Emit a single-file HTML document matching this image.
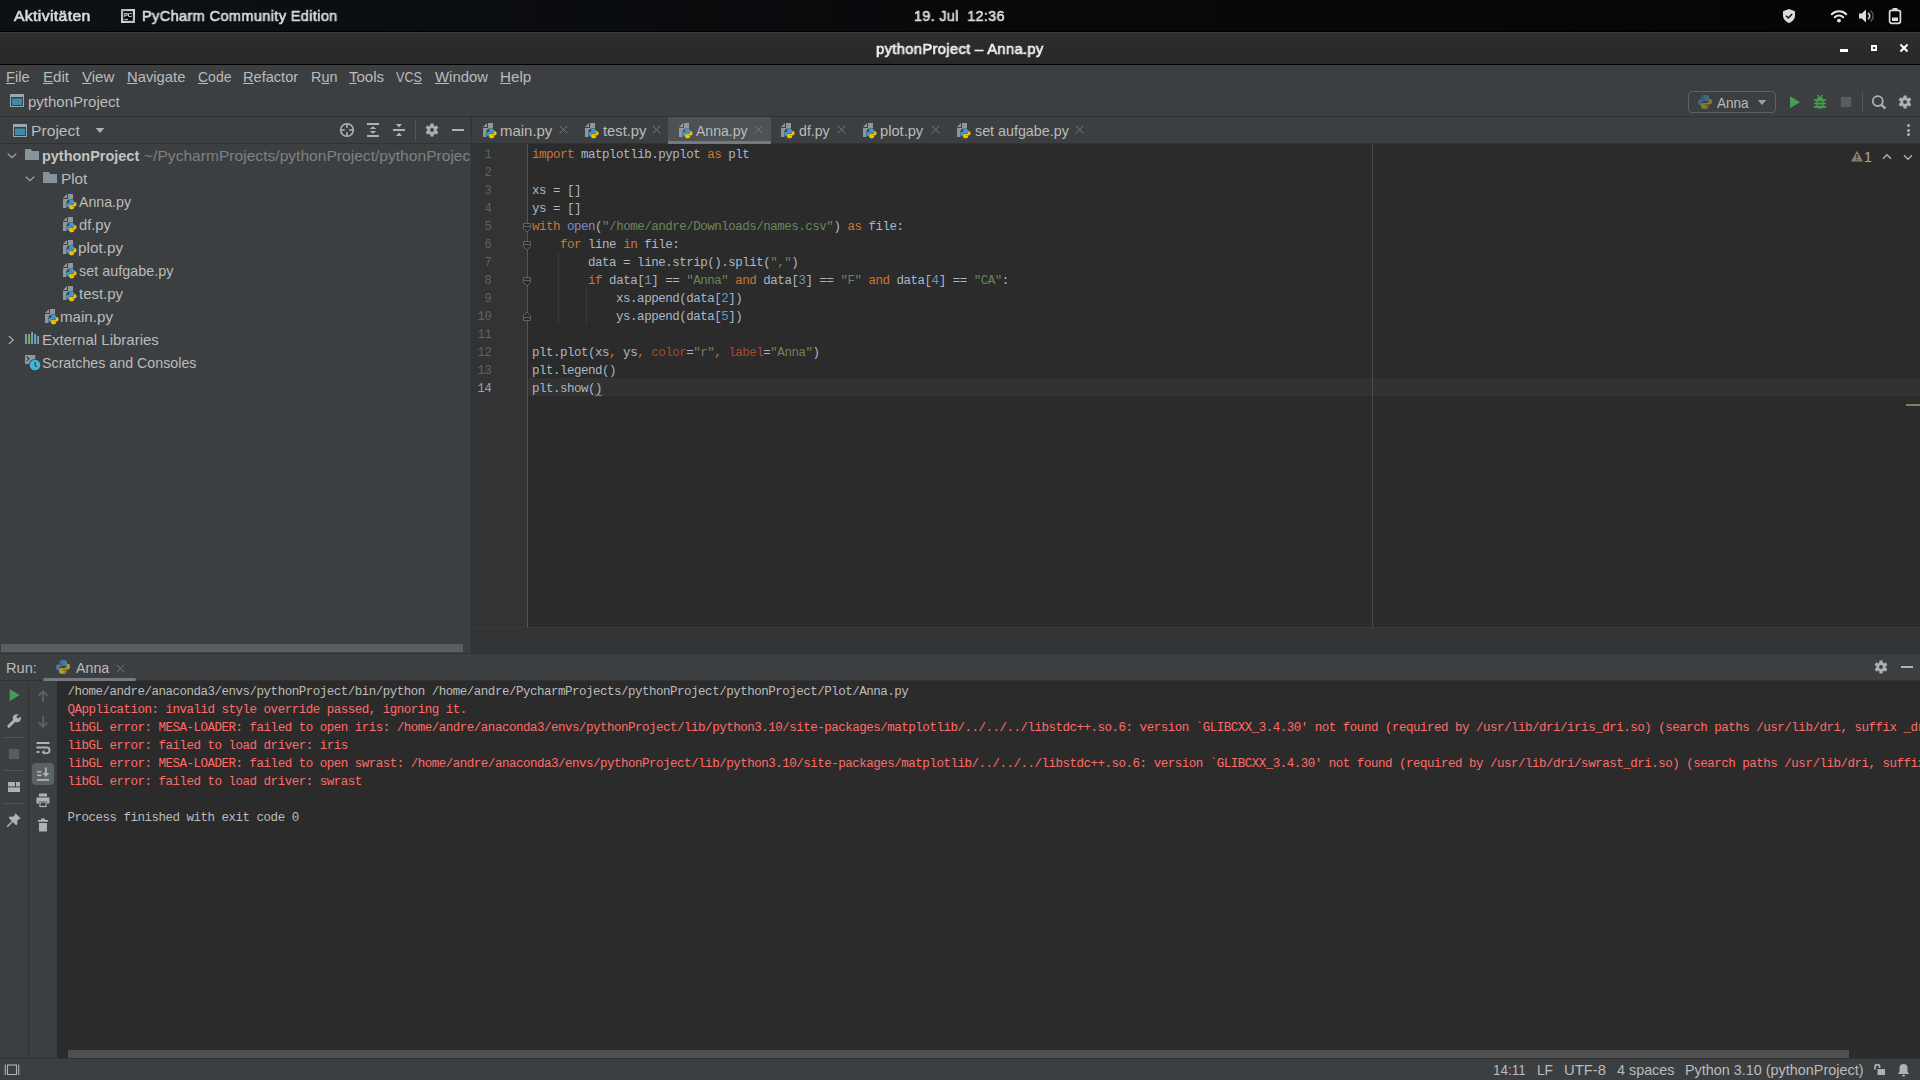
<!DOCTYPE html>
<html lang="en"><head><meta charset="utf-8"><title>pythonProject – Anna.py</title><style>
html,body{margin:0;padding:0;background:#3c3f41}
body{width:1920px;height:1080px;position:relative;overflow:hidden;font-family:"Liberation Sans", sans-serif}
.t{position:absolute;white-space:pre;line-height:20px;font-family:"Liberation Sans", sans-serif;transform-origin:0 50%}
.sb{letter-spacing:.35px;-webkit-text-stroke:.65px currentColor;will-change:transform}
.t u{text-decoration:underline;text-decoration-thickness:1px;text-underline-offset:0.6px}
.m{position:absolute;white-space:pre;line-height:18px;height:18px;font-family:"Liberation Mono", monospace;font-size:12.5px;letter-spacing:-0.4932px}
svg{overflow:visible}
</style></head>
<body>
<div style="position:absolute;left:0px;top:0px;width:1920px;height:31px;background:linear-gradient(90deg,#0d1115 0%,#08090b 50%,#040506 100%);"></div>
<div style="position:absolute;left:0px;top:31px;width:1920px;height:1px;background:#000;"></div>
<div style="position:absolute;left:0px;top:32px;width:1920px;height:32px;background:linear-gradient(#2e2e2e,#272727);"></div>
<div style="position:absolute;left:0px;top:32px;width:1920px;height:1px;background:#3a3a3a;"></div>
<div style="position:absolute;left:0px;top:64px;width:1920px;height:1px;background:#000;"></div>
<div style="position:absolute;left:0px;top:65px;width:1920px;height:1015px;background:#3c3f41;"></div>
<div style="position:absolute;left:0px;top:116px;width:1920px;height:1px;background:#323232;"></div>
<div style="position:absolute;left:0px;top:143px;width:1920px;height:1px;background:#323232;"></div>
<div style="position:absolute;left:471px;top:117px;width:1px;height:537px;background:#323232;"></div>
<div style="position:absolute;left:472px;top:144px;width:1448px;height:483px;background:#2b2b2b;"></div>
<div style="position:absolute;left:472px;top:144px;width:55px;height:483px;background:#313335;"></div>
<div style="position:absolute;left:527px;top:144px;width:1px;height:483px;background:#555555;"></div>
<div style="position:absolute;left:528px;top:378px;width:1392px;height:18px;background:#323232;"></div>
<div style="position:absolute;left:1372px;top:144px;width:1px;height:483px;background:#4b4b4b;"></div>
<div style="position:absolute;left:472px;top:627px;width:1448px;height:1px;background:#3a3c3e;"></div>
<div style="position:absolute;left:472px;top:628px;width:1448px;height:25px;background:#313335;"></div>
<div style="position:absolute;left:0px;top:653px;width:1920px;height:1px;background:#323232;"></div>
<div style="position:absolute;left:1px;top:644px;width:462px;height:8px;background:#5b5d5f;"></div>
<div style="position:absolute;left:0px;top:680px;width:1920px;height:1px;background:#323232;"></div>
<div style="position:absolute;left:57px;top:681px;width:1863px;height:377px;background:#2b2b2b;"></div>
<div style="position:absolute;left:28px;top:681px;width:1px;height:377px;background:#323232;"></div>
<div style="position:absolute;left:68px;top:1050px;width:1781px;height:8px;background:#4f4f4f;"></div>
<div style="position:absolute;left:0px;top:1058px;width:1920px;height:1px;background:#323232;"></div>
<svg style="position:absolute;left:121px;top:9px;will-change:transform" width="14" height="14" viewBox="0 0 14 14"><defs><linearGradient id="pcg" x1="0" y1="0" x2="1" y2="1"><stop offset="0" stop-color="#a8a8a8"/><stop offset=".5" stop-color="#d6d6d6"/><stop offset="1" stop-color="#b4b4b4"/></linearGradient></defs><rect width="14" height="14" fill="url(#pcg)"/><rect x="2.200" y="2.200" width="9.600" height="9.600" fill="#050505"/><rect x="3.200" y="9.900" width="3.800" height=".9" fill="#ddd"/><text x="2.900" y="8.100" font-family="Liberation Sans, sans-serif" font-weight="700" font-size="6.200" fill="#f4f4f4" textLength="8.200" lengthAdjust="spacingAndGlyphs">PC</text></svg>
<svg style="position:absolute;left:1782px;top:8px;" width="14" height="16" viewBox="0 0 14 16"><path fill="#dcdcdc" d="M7 1l6 2.300v4.200c0 3.500-2.600 6.300-6 7.500-3.400-1.200-6-4-6-7.500V3.300z"/><path fill="none" stroke="#111" stroke-width="1.500" d="M4 7.800l2.300 2.200 3.900-4"/></svg>
<svg style="position:absolute;left:1830px;top:9px;" width="18" height="14" viewBox="0 0 18 14"><g fill="none" stroke="#e6e6e6" stroke-width="2" stroke-linecap="round"><path d="M1.800 5.200a10.200 10.200 0 0114.400 0"/><path d="M4.800 8.200a6 6 0 018.400 0"/></g><circle cx="9" cy="11.600" r="1.900" fill="#e6e6e6"/></svg>
<svg style="position:absolute;left:1858px;top:8px;" width="18" height="16" viewBox="0 0 18 16"><path fill="#dcdcdc" d="M1 5.500h2.800L8 1.500v13l-4.200-4H1z"/><path fill="none" stroke="#dcdcdc" stroke-width="1.600" stroke-linecap="round" d="M10.500 5.300a3.600 3.600 0 010 5.400"/><path fill="none" stroke="#555" stroke-width="1.600" stroke-linecap="round" d="M13 3a7 7 0 010 10"/></svg>
<svg style="position:absolute;left:1888px;top:7px;" width="14" height="18" viewBox="0 0 14 18"><rect x="4.500" y="1" width="5" height="2.500" rx=".8" fill="#dcdcdc"/><rect x="1.600" y="3.300" width="10.800" height="13" rx="2" fill="none" stroke="#dcdcdc" stroke-width="1.700"/><rect x="4" y="10.500" width="6" height="3.500" fill="#dcdcdc"/></svg>
<div style="position:absolute;left:1840px;top:49.4px;width:8px;height:2.8px;background:#fff;"></div>
<div style="position:absolute;left:1870.6px;top:44.700px;width:2.600px;height:2.500px;border:2px solid #fff"></div>
<svg style="position:absolute;left:1899px;top:43px;" width="10" height="10" viewBox="0 0 10 10"><path stroke="#fff" stroke-width="2.100" d="M1.500 1.500l7 7M8.500 1.500l-7 7"/></svg>
<svg style="position:absolute;left:10px;top:94px;" width="14" height="13" viewBox="0 0 14 13"><rect x=".5" y=".5" width="13" height="12" fill="none" stroke="#9aa7b0"/><rect x="0" y="0" width="14" height="3" fill="#9aa7b0"/><rect x="2" y="4.500" width="10" height="6.500" fill="#3d8ba8"/></svg>
<div style="position:absolute;left:1688px;top:91px;width:86px;height:20px;border:1px solid #5f6264;border-radius:4px"></div>
<svg style="position:absolute;left:1697px;top:94px;" width="16" height="16" viewBox="0 0 16 16"><g opacity="1"><path fill="#3d6c84" d="M7.900 1C5.900 1 4.500 1.700 4.500 3v1.800h3.600v.6H3.200C1.900 5.400 1 6.600 1 8.300c0 1.800.9 2.900 2.100 2.900h1.300V9.300c0-1.300 1.100-2.300 2.400-2.300h3.300c1.100 0 1.900-.9 1.900-2V3c0-1.300-1.800-2-4.100-2zM6 2.200a.7.7 0 110 1.400.7.7 0 010-1.400z"/><path fill="#8c772f" d="M8.100 15c2 0 3.400-.7 3.400-2v-1.800H7.900v-.6h4.900c1.300 0 2.200-1.200 2.200-2.900 0-1.800-.9-2.900-2.100-2.900h-1.300v1.900c0 1.300-1.100 2.300-2.400 2.300H5.900c-1.100 0-1.900.9-1.900 2v2c0 1.300 1.800 2 4.100 2zm1.900-1.200a.7.7 0 110-1.400.7.7 0 010 1.400z"/></g></svg>
<svg style="position:absolute;left:1757px;top:99px;" width="10" height="7" viewBox="0 0 10 7"><path fill="#9a9da0" d="M.7 1h8.600L5 6z"/></svg>
<svg style="position:absolute;left:1788px;top:94px;" width="16" height="16" viewBox="0 0 16 16"><path fill="#499c54" d="M2 2.200l10 6-10 6z"/></svg>
<svg style="position:absolute;left:1812px;top:94px;" width="16" height="16" viewBox="0 0 16 16"><g fill="#499c54"><path d="M4.600 6.300a3.400 3.400 0 016.800 0z"/><path d="M4.300 6.700h7.400v4.200a3.700 3.700 0 01-7.400 0z"/></g><g stroke="#499c54" stroke-width="1.500" fill="none"><path d="M5.400 .9l1.900 2.500M10.600 .9L8.700 3.400"/><path stroke-width="1.700" d="M2 6.200h12M2 9.500h12M2 12.800h12"/></g><g stroke="#3c3f41" stroke-width="1.100"><path d="M5.600 7.900h4.800M5.600 11.100h4.800"/></g></svg>
<div style="position:absolute;left:1841px;top:97px;width:10px;height:10px;background:#5b5c5d;"></div>
<div style="position:absolute;left:1862px;top:92px;width:1px;height:20px;background:#555759;"></div>
<svg style="position:absolute;left:1871px;top:94px;" width="16" height="16" viewBox="0 0 16 16"><circle cx="6.800" cy="7.100" r="5" fill="none" stroke="#afb1b3" stroke-width="1.800"/><path stroke="#afb1b3" stroke-width="2.400" d="M10.500 10.800l4 3.800"/></svg>
<svg style="position:absolute;left:1897px;top:94px;" width="16" height="16" viewBox="0 0 16 16"><path fill="#afb1b3" fill-rule="evenodd" stroke="#afb1b3" stroke-width=".5" stroke-linejoin="round" d="M6.39 3.80L6.78 1.72L9.22 1.72L9.61 3.80L10.83 4.50L12.83 3.80L14.05 5.92L12.44 7.30L12.44 8.70L14.05 10.08L12.83 12.20L10.83 11.50L9.61 12.20L9.22 14.28L6.78 14.28L6.39 12.20L5.17 11.50L3.17 12.20L1.95 10.08L3.56 8.70L3.56 7.30L1.95 5.92L3.17 3.80L5.17 4.50zM8 5.800a2.200 2.200 0 100 4.400 2.200 2.200 0 000-4.400z"/><circle cx="8" cy="8" r="1.700" fill="none"/></svg>
<svg style="position:absolute;left:13px;top:124px;" width="14" height="13" viewBox="0 0 14 13"><rect x=".5" y=".5" width="13" height="12" fill="none" stroke="#9aa7b0"/><rect x="0" y="0" width="14" height="3" fill="#9aa7b0"/><rect x="2" y="4.500" width="10" height="6.500" fill="#3d8ba8"/></svg>
<svg style="position:absolute;left:95px;top:127px;" width="10" height="7" viewBox="0 0 10 7"><path fill="#afb1b3" d="M.7 1h8.600L5 6z"/></svg>
<svg style="position:absolute;left:339px;top:122px;" width="16" height="16" viewBox="0 0 16 16"><circle cx="8" cy="8" r="6.300" fill="none" stroke="#afb1b3" stroke-width="1.600"/><path stroke="#afb1b3" stroke-width="1.600" d="M8 1.500v4.300M8 10.200v4.300M1.500 8h4.300M10.200 8h4.300"/></svg>
<svg style="position:absolute;left:365px;top:122px;" width="16" height="16" viewBox="0 0 16 16"><g fill="#afb1b3"><rect x="2" y="1" width="12" height="2"/><rect x="2" y="13" width="12" height="2"/><path d="M8 4.300l3.200 2.700H4.800zM8 11.700l3.200-2.700H4.800z"/></g></svg>
<svg style="position:absolute;left:391px;top:122px;" width="16" height="16" viewBox="0 0 16 16"><g fill="#afb1b3"><rect x="2" y="7" width="12" height="2"/><path d="M8 5.500l3-3.500H5zM8 10.500l3 3.500H5z"/></g></svg>
<div style="position:absolute;left:415px;top:120px;width:1px;height:20px;background:#555759;"></div>
<svg style="position:absolute;left:424px;top:122px;" width="16" height="16" viewBox="0 0 16 16"><path fill="#afb1b3" fill-rule="evenodd" stroke="#afb1b3" stroke-width=".5" stroke-linejoin="round" d="M6.39 3.80L6.78 1.72L9.22 1.72L9.61 3.80L10.83 4.50L12.83 3.80L14.05 5.92L12.44 7.30L12.44 8.70L14.05 10.08L12.83 12.20L10.83 11.50L9.61 12.20L9.22 14.28L6.78 14.28L6.39 12.20L5.17 11.50L3.17 12.20L1.95 10.08L3.56 8.70L3.56 7.30L1.95 5.92L3.17 3.80L5.17 4.50zM8 5.800a2.200 2.200 0 100 4.400 2.200 2.200 0 000-4.400z"/><circle cx="8" cy="8" r="1.700" fill="none"/></svg>
<div style="position:absolute;left:452px;top:129px;width:12px;height:2px;background:#afb1b3;"></div>
<svg style="position:absolute;left:3.5px;top:147.5px;" width="16" height="16" viewBox="0 0 16 16"><path fill="none" stroke="#a7aaac" stroke-width="1.200" d="M3.700 5.600L8 9.700l4.300-4.100"/></svg>
<svg style="position:absolute;left:24px;top:147px;" width="16" height="16" viewBox="0 0 16 16"><path fill="#87939a" d="M1 2h5.800L8.200 4H15v9H1z"/></svg>
<div style="position:absolute;left:0;top:144px;width:470px;height:23px;overflow:hidden">
<span class="t" id="t19" style="left:144.16px;top:1.80px;font-size:15px;font-weight:400;color:#7f8183;transform:scaleX(1.0396)">~/PycharmProjects/pythonProject/pythonProject</span></div>
<svg style="position:absolute;left:21.5px;top:170.5px;" width="16" height="16" viewBox="0 0 16 16"><path fill="none" stroke="#a7aaac" stroke-width="1.200" d="M3.700 5.600L8 9.700l4.300-4.100"/></svg>
<svg style="position:absolute;left:42px;top:170px;" width="16" height="16" viewBox="0 0 16 16"><path fill="#87939a" d="M1 2h5.800L8.200 4H15v9H1z"/></svg>
<svg style="position:absolute;left:60px;top:193px;" width="17" height="17" viewBox="0 0 17 17"><path fill="#9aa7b0" fill-opacity=".85" d="M7 1L3 5h4z"/><path fill="#9aa7b0" fill-opacity=".85" d="M8 1v5H3v9h3.400V10.200Q6.400 6.400 10.200 6.400H13V1z"/><path fill="#3c9dd6" stroke="#3c9dd6" stroke-width=".3" d="M11.4 7c-1.3 0-2.3.5-2.3 1.4v1.1h2.4v.4H8.2c-.9 0-1.5.8-1.5 2 0 1.300.6 2 1.400 2h.8v-1.2c0-.9.7-1.500 1.600-1.500h2.200c.700 0 1.200-.6 1.200-1.300V8.400C13.900 7.500 12.700 7 11.400 7z"/><path fill="#f6c500" stroke="#f6c500" stroke-width=".3" d="M11.700 16.200c1.300 0 2.300-.5 2.300-1.400v-1.100h-2.400v-.4h3.300c.9 0 1.500-.8 1.500-2 0-1.300-.6-2-1.400-2h-.8v1.200c0 .9-.7 1.500-1.600 1.500h-2.200c-.700 0-1.200.6-1.200 1.300v1.500c0 .9 1.200 1.400 2.500 1.400z"/></svg>
<svg style="position:absolute;left:60px;top:216px;" width="17" height="17" viewBox="0 0 17 17"><path fill="#9aa7b0" fill-opacity=".85" d="M7 1L3 5h4z"/><path fill="#9aa7b0" fill-opacity=".85" d="M8 1v5H3v9h3.400V10.200Q6.400 6.400 10.200 6.400H13V1z"/><path fill="#3c9dd6" stroke="#3c9dd6" stroke-width=".3" d="M11.4 7c-1.3 0-2.3.5-2.3 1.4v1.1h2.4v.4H8.2c-.9 0-1.5.8-1.5 2 0 1.300.6 2 1.400 2h.8v-1.2c0-.9.7-1.500 1.600-1.500h2.200c.700 0 1.200-.6 1.200-1.300V8.400C13.900 7.500 12.700 7 11.400 7z"/><path fill="#f6c500" stroke="#f6c500" stroke-width=".3" d="M11.700 16.200c1.300 0 2.300-.5 2.300-1.400v-1.100h-2.400v-.4h3.300c.9 0 1.500-.8 1.500-2 0-1.300-.6-2-1.400-2h-.8v1.200c0 .9-.7 1.500-1.600 1.500h-2.200c-.700 0-1.200.6-1.200 1.300v1.500c0 .9 1.200 1.400 2.500 1.400z"/></svg>
<svg style="position:absolute;left:60px;top:239px;" width="17" height="17" viewBox="0 0 17 17"><path fill="#9aa7b0" fill-opacity=".85" d="M7 1L3 5h4z"/><path fill="#9aa7b0" fill-opacity=".85" d="M8 1v5H3v9h3.400V10.200Q6.400 6.400 10.200 6.400H13V1z"/><path fill="#3c9dd6" stroke="#3c9dd6" stroke-width=".3" d="M11.4 7c-1.3 0-2.3.5-2.3 1.4v1.1h2.4v.4H8.2c-.9 0-1.5.8-1.5 2 0 1.300.6 2 1.400 2h.8v-1.2c0-.9.7-1.500 1.600-1.500h2.200c.700 0 1.200-.6 1.200-1.300V8.400C13.900 7.500 12.700 7 11.400 7z"/><path fill="#f6c500" stroke="#f6c500" stroke-width=".3" d="M11.700 16.200c1.300 0 2.300-.5 2.300-1.400v-1.100h-2.400v-.4h3.300c.9 0 1.500-.8 1.500-2 0-1.300-.6-2-1.400-2h-.8v1.200c0 .9-.7 1.500-1.600 1.500h-2.200c-.700 0-1.200.6-1.200 1.300v1.500c0 .9 1.200 1.400 2.500 1.400z"/></svg>
<svg style="position:absolute;left:60px;top:262px;" width="17" height="17" viewBox="0 0 17 17"><path fill="#9aa7b0" fill-opacity=".85" d="M7 1L3 5h4z"/><path fill="#9aa7b0" fill-opacity=".85" d="M8 1v5H3v9h3.400V10.200Q6.400 6.400 10.200 6.400H13V1z"/><path fill="#3c9dd6" stroke="#3c9dd6" stroke-width=".3" d="M11.4 7c-1.3 0-2.3.5-2.3 1.4v1.1h2.4v.4H8.2c-.9 0-1.5.8-1.5 2 0 1.300.6 2 1.400 2h.8v-1.2c0-.9.7-1.500 1.600-1.500h2.200c.700 0 1.200-.6 1.200-1.300V8.400C13.900 7.500 12.700 7 11.400 7z"/><path fill="#f6c500" stroke="#f6c500" stroke-width=".3" d="M11.700 16.200c1.300 0 2.300-.5 2.300-1.400v-1.100h-2.400v-.4h3.300c.9 0 1.500-.8 1.500-2 0-1.300-.6-2-1.400-2h-.8v1.200c0 .9-.7 1.500-1.600 1.500h-2.200c-.700 0-1.200.6-1.200 1.300v1.500c0 .9 1.200 1.400 2.500 1.400z"/></svg>
<svg style="position:absolute;left:60px;top:285px;" width="17" height="17" viewBox="0 0 17 17"><path fill="#9aa7b0" fill-opacity=".85" d="M7 1L3 5h4z"/><path fill="#9aa7b0" fill-opacity=".85" d="M8 1v5H3v9h3.400V10.200Q6.400 6.400 10.200 6.400H13V1z"/><path fill="#3c9dd6" stroke="#3c9dd6" stroke-width=".3" d="M11.4 7c-1.3 0-2.3.5-2.3 1.4v1.1h2.4v.4H8.2c-.9 0-1.5.8-1.5 2 0 1.300.6 2 1.400 2h.8v-1.2c0-.9.7-1.500 1.600-1.500h2.200c.700 0 1.200-.6 1.200-1.300V8.400C13.900 7.500 12.700 7 11.400 7z"/><path fill="#f6c500" stroke="#f6c500" stroke-width=".3" d="M11.700 16.200c1.300 0 2.300-.5 2.300-1.400v-1.100h-2.400v-.4h3.300c.9 0 1.500-.8 1.500-2 0-1.300-.6-2-1.400-2h-.8v1.200c0 .9-.7 1.500-1.600 1.500h-2.200c-.700 0-1.200.6-1.200 1.300v1.500c0 .9 1.200 1.400 2.500 1.400z"/></svg>
<svg style="position:absolute;left:42px;top:308px;" width="17" height="17" viewBox="0 0 17 17"><path fill="#9aa7b0" fill-opacity=".85" d="M7 1L3 5h4z"/><path fill="#9aa7b0" fill-opacity=".85" d="M8 1v5H3v9h3.400V10.200Q6.400 6.400 10.200 6.400H13V1z"/><path fill="#3c9dd6" stroke="#3c9dd6" stroke-width=".3" d="M11.4 7c-1.3 0-2.3.5-2.3 1.4v1.1h2.4v.4H8.2c-.9 0-1.5.8-1.5 2 0 1.300.6 2 1.400 2h.8v-1.2c0-.9.7-1.500 1.600-1.500h2.200c.700 0 1.200-.6 1.200-1.300V8.400C13.900 7.500 12.700 7 11.400 7z"/><path fill="#f6c500" stroke="#f6c500" stroke-width=".3" d="M11.700 16.200c1.300 0 2.300-.5 2.300-1.400v-1.100h-2.400v-.4h3.300c.9 0 1.500-.8 1.500-2 0-1.300-.6-2-1.400-2h-.8v1.200c0 .9-.7 1.500-1.600 1.500h-2.200c-.700 0-1.200.6-1.200 1.300v1.500c0 .9 1.200 1.400 2.500 1.400z"/></svg>
<svg style="position:absolute;left:3.3000000000000007px;top:331.5px;" width="16" height="16" viewBox="0 0 16 16"><path fill="none" stroke="#a7aaac" stroke-width="1.200" d="M5.800 4L10.300 8l-4.500 4"/></svg>
<svg style="position:absolute;left:24px;top:331px;" width="16" height="16" viewBox="0 0 16 16"><g fill="#8e9aa2"><rect x="1" y="3" width="1.900" height="10"/><rect x="7.100" y="1" width="1.900" height="12"/><rect x="13.200" y="5" width="1.800" height="8"/></g><rect x="4" y="3" width="2.100" height="10" fill="#62b543"/><rect x="10.100" y="3" width="2" height="10" fill="#40b6e0"/></svg>
<svg style="position:absolute;left:24px;top:354px;" width="17" height="17" viewBox="0 0 17 17"><path fill="#8e9aa2" d="M1 1h10.200v4.300a6.300 6.300 0 00-6.400 4.700H1z"/><path fill="none" stroke="#3c3f41" stroke-width="1.100" d="M2.500 2.500l2.600 2.300-2.600 2.300"/><circle cx="11" cy="11" r="5.300" fill="#40b6e0"/><path fill="none" stroke="#2f4752" stroke-width="1.300" d="M11 8v3.200l1.800 1.600"/></svg>
<div style="position:absolute;left:668px;top:117px;width:103px;height:27px;background:#4e5254;"></div>
<div style="position:absolute;left:668px;top:141px;width:103px;height:3px;background:#747a80;"></div>
<svg style="position:absolute;left:480px;top:122px;" width="17" height="17" viewBox="0 0 17 17"><path fill="#9aa7b0" fill-opacity=".85" d="M7 1L3 5h4z"/><path fill="#9aa7b0" fill-opacity=".85" d="M8 1v5H3v9h3.400V10.200Q6.400 6.400 10.200 6.400H13V1z"/><path fill="#3c9dd6" stroke="#3c9dd6" stroke-width=".3" d="M11.4 7c-1.3 0-2.3.5-2.3 1.4v1.1h2.4v.4H8.2c-.9 0-1.5.8-1.5 2 0 1.300.6 2 1.400 2h.8v-1.2c0-.9.7-1.500 1.600-1.500h2.200c.700 0 1.200-.6 1.200-1.300V8.400C13.900 7.500 12.700 7 11.400 7z"/><path fill="#f6c500" stroke="#f6c500" stroke-width=".3" d="M11.700 16.200c1.300 0 2.300-.5 2.300-1.400v-1.100h-2.400v-.4h3.300c.9 0 1.500-.8 1.500-2 0-1.300-.6-2-1.400-2h-.8v1.200c0 .9-.7 1.500-1.600 1.500h-2.200c-.700 0-1.200.6-1.200 1.300v1.500c0 .9 1.200 1.400 2.500 1.400z"/></svg>
<svg style="position:absolute;left:558.6px;top:125.4px;" width="10" height="10" viewBox="0 0 10 10"><path stroke="#75787a" stroke-width="1" d="M.8 .8l7.600 7.600M8.400 .8L.8 8.400"/></svg>
<svg style="position:absolute;left:581.7px;top:122px;" width="17" height="17" viewBox="0 0 17 17"><path fill="#9aa7b0" fill-opacity=".85" d="M7 1L3 5h4z"/><path fill="#9aa7b0" fill-opacity=".85" d="M8 1v5H3v9h3.400V10.200Q6.400 6.400 10.200 6.400H13V1z"/><path fill="#3c9dd6" stroke="#3c9dd6" stroke-width=".3" d="M11.4 7c-1.3 0-2.3.5-2.3 1.4v1.1h2.4v.4H8.2c-.9 0-1.5.8-1.5 2 0 1.300.6 2 1.400 2h.8v-1.2c0-.9.7-1.500 1.600-1.500h2.200c.700 0 1.200-.6 1.200-1.300V8.400C13.900 7.500 12.700 7 11.400 7z"/><path fill="#f6c500" stroke="#f6c500" stroke-width=".3" d="M11.700 16.200c1.300 0 2.300-.5 2.300-1.400v-1.100h-2.400v-.4h3.300c.9 0 1.500-.8 1.500-2 0-1.300-.6-2-1.400-2h-.8v1.200c0 .9-.7 1.500-1.600 1.500h-2.200c-.700 0-1.200.6-1.200 1.300v1.500c0 .9 1.200 1.400 2.500 1.400z"/></svg>
<svg style="position:absolute;left:652.4px;top:125.4px;" width="10" height="10" viewBox="0 0 10 10"><path stroke="#75787a" stroke-width="1" d="M.8 .8l7.600 7.600M8.400 .8L.8 8.400"/></svg>
<svg style="position:absolute;left:676px;top:122px;" width="17" height="17" viewBox="0 0 17 17"><path fill="#9aa7b0" fill-opacity=".85" d="M7 1L3 5h4z"/><path fill="#9aa7b0" fill-opacity=".85" d="M8 1v5H3v9h3.400V10.200Q6.400 6.400 10.200 6.400H13V1z"/><path fill="#3c9dd6" stroke="#3c9dd6" stroke-width=".3" d="M11.4 7c-1.3 0-2.3.5-2.3 1.4v1.1h2.4v.4H8.2c-.9 0-1.5.8-1.5 2 0 1.300.6 2 1.400 2h.8v-1.2c0-.9.7-1.500 1.600-1.500h2.200c.700 0 1.200-.6 1.200-1.300V8.400C13.900 7.500 12.700 7 11.400 7z"/><path fill="#f6c500" stroke="#f6c500" stroke-width=".3" d="M11.700 16.200c1.300 0 2.300-.5 2.300-1.400v-1.100h-2.400v-.4h3.300c.9 0 1.500-.8 1.500-2 0-1.300-.6-2-1.400-2h-.8v1.200c0 .9-.7 1.500-1.600 1.500h-2.200c-.700 0-1.200.6-1.200 1.300v1.500c0 .9 1.200 1.400 2.500 1.400z"/></svg>
<svg style="position:absolute;left:754.4px;top:125.4px;" width="10" height="10" viewBox="0 0 10 10"><path stroke="#75787a" stroke-width="1" d="M.8 .8l7.600 7.600M8.400 .8L.8 8.400"/></svg>
<svg style="position:absolute;left:777.8px;top:122px;" width="17" height="17" viewBox="0 0 17 17"><path fill="#9aa7b0" fill-opacity=".85" d="M7 1L3 5h4z"/><path fill="#9aa7b0" fill-opacity=".85" d="M8 1v5H3v9h3.400V10.200Q6.400 6.400 10.200 6.400H13V1z"/><path fill="#3c9dd6" stroke="#3c9dd6" stroke-width=".3" d="M11.4 7c-1.3 0-2.3.5-2.3 1.4v1.1h2.4v.4H8.2c-.9 0-1.5.8-1.5 2 0 1.300.6 2 1.400 2h.8v-1.2c0-.9.7-1.500 1.600-1.500h2.200c.700 0 1.200-.6 1.200-1.300V8.400C13.900 7.500 12.700 7 11.400 7z"/><path fill="#f6c500" stroke="#f6c500" stroke-width=".3" d="M11.700 16.200c1.300 0 2.300-.5 2.300-1.400v-1.100h-2.400v-.4h3.300c.9 0 1.500-.8 1.500-2 0-1.300-.6-2-1.400-2h-.8v1.200c0 .9-.7 1.500-1.600 1.500h-2.200c-.700 0-1.200.6-1.200 1.300v1.500c0 .9 1.200 1.400 2.500 1.400z"/></svg>
<svg style="position:absolute;left:836.6px;top:125.4px;" width="10" height="10" viewBox="0 0 10 10"><path stroke="#75787a" stroke-width="1" d="M.8 .8l7.600 7.600M8.400 .8L.8 8.400"/></svg>
<svg style="position:absolute;left:859.8px;top:122px;" width="17" height="17" viewBox="0 0 17 17"><path fill="#9aa7b0" fill-opacity=".85" d="M7 1L3 5h4z"/><path fill="#9aa7b0" fill-opacity=".85" d="M8 1v5H3v9h3.400V10.200Q6.400 6.400 10.200 6.400H13V1z"/><path fill="#3c9dd6" stroke="#3c9dd6" stroke-width=".3" d="M11.4 7c-1.3 0-2.3.5-2.3 1.4v1.1h2.4v.4H8.2c-.9 0-1.5.8-1.5 2 0 1.300.6 2 1.400 2h.8v-1.2c0-.9.7-1.500 1.600-1.500h2.200c.700 0 1.200-.6 1.200-1.300V8.400C13.900 7.500 12.700 7 11.400 7z"/><path fill="#f6c500" stroke="#f6c500" stroke-width=".3" d="M11.700 16.200c1.300 0 2.300-.5 2.300-1.400v-1.100h-2.400v-.4h3.300c.9 0 1.500-.8 1.500-2 0-1.300-.6-2-1.400-2h-.8v1.200c0 .9-.7 1.500-1.600 1.500h-2.200c-.700 0-1.200.6-1.200 1.300v1.500c0 .9 1.200 1.400 2.500 1.400z"/></svg>
<svg style="position:absolute;left:930.8000000000001px;top:125.4px;" width="10" height="10" viewBox="0 0 10 10"><path stroke="#75787a" stroke-width="1" d="M.8 .8l7.600 7.600M8.400 .8L.8 8.400"/></svg>
<svg style="position:absolute;left:954px;top:122px;" width="17" height="17" viewBox="0 0 17 17"><path fill="#9aa7b0" fill-opacity=".85" d="M7 1L3 5h4z"/><path fill="#9aa7b0" fill-opacity=".85" d="M8 1v5H3v9h3.400V10.200Q6.400 6.400 10.200 6.400H13V1z"/><path fill="#3c9dd6" stroke="#3c9dd6" stroke-width=".3" d="M11.4 7c-1.3 0-2.3.5-2.3 1.4v1.1h2.4v.4H8.2c-.9 0-1.5.8-1.5 2 0 1.300.6 2 1.400 2h.8v-1.2c0-.9.7-1.500 1.600-1.500h2.200c.700 0 1.200-.6 1.200-1.300V8.400C13.900 7.500 12.700 7 11.400 7z"/><path fill="#f6c500" stroke="#f6c500" stroke-width=".3" d="M11.700 16.200c1.300 0 2.300-.5 2.300-1.400v-1.100h-2.400v-.4h3.300c.9 0 1.500-.8 1.500-2 0-1.300-.6-2-1.400-2h-.8v1.200c0 .9-.7 1.500-1.600 1.500h-2.200c-.700 0-1.200.6-1.200 1.300v1.500c0 .9 1.200 1.400 2.500 1.400z"/></svg>
<svg style="position:absolute;left:1075.3999999999999px;top:125.4px;" width="10" height="10" viewBox="0 0 10 10"><path stroke="#75787a" stroke-width="1" d="M.8 .8l7.600 7.600M8.400 .8L.8 8.400"/></svg>
<div style="position:absolute;left:1906.500px;top:124.2px;width:3px;height:3px;border-radius:50%;background:#afb1b3"></div>
<div style="position:absolute;left:1906.500px;top:128.6px;width:3px;height:3px;border-radius:50%;background:#afb1b3"></div>
<div style="position:absolute;left:1906.500px;top:133.0px;width:3px;height:3px;border-radius:50%;background:#afb1b3"></div>
<div class="m" style="left:484.492px;top:145.67px;color:#606366;font-size:12px;letter-spacing:-.193px">1</div>
<div class="m" style="left:532px;top:145.67px;color:#a9b7c6;"><span style="color:#cc7832">import</span><span style="color:#a9b7c6"> matplotlib.pyplot </span><span style="color:#cc7832">as</span><span style="color:#a9b7c6"> plt</span></div>
<div class="m" style="left:484.492px;top:163.67px;color:#606366;font-size:12px;letter-spacing:-.193px">2</div>
<div class="m" style="left:484.492px;top:181.67px;color:#606366;font-size:12px;letter-spacing:-.193px">3</div>
<div class="m" style="left:532px;top:181.67px;color:#a9b7c6;"><span style="color:#a9b7c6">xs = []</span></div>
<div class="m" style="left:484.492px;top:199.67px;color:#606366;font-size:12px;letter-spacing:-.193px">4</div>
<div class="m" style="left:532px;top:199.67px;color:#a9b7c6;"><span style="color:#a9b7c6">ys = []</span></div>
<div class="m" style="left:484.492px;top:217.67px;color:#606366;font-size:12px;letter-spacing:-.193px">5</div>
<div class="m" style="left:532px;top:217.67px;color:#a9b7c6;"><span style="color:#cc7832">with </span><span style="color:#8888c6">open</span><span style="color:#a9b7c6">(</span><span style="color:#6a8759">&quot;/home/andre/Downloads/names.csv&quot;</span><span style="color:#a9b7c6">) </span><span style="color:#cc7832">as</span><span style="color:#a9b7c6"> file:</span></div>
<div class="m" style="left:484.492px;top:235.67px;color:#606366;font-size:12px;letter-spacing:-.193px">6</div>
<div class="m" style="left:532px;top:235.67px;color:#a9b7c6;"><span style="color:#a9b7c6">    </span><span style="color:#cc7832">for</span><span style="color:#a9b7c6"> line </span><span style="color:#cc7832">in</span><span style="color:#a9b7c6"> file:</span></div>
<div class="m" style="left:484.492px;top:253.67px;color:#606366;font-size:12px;letter-spacing:-.193px">7</div>
<div class="m" style="left:532px;top:253.67px;color:#a9b7c6;"><span style="color:#a9b7c6">        data = line.strip().split(</span><span style="color:#6a8759">&quot;,&quot;</span><span style="color:#a9b7c6">)</span></div>
<div class="m" style="left:484.492px;top:271.67px;color:#606366;font-size:12px;letter-spacing:-.193px">8</div>
<div class="m" style="left:532px;top:271.67px;color:#a9b7c6;"><span style="color:#a9b7c6">        </span><span style="color:#cc7832">if</span><span style="color:#a9b7c6"> data[</span><span style="color:#6897bb">1</span><span style="color:#a9b7c6">] == </span><span style="color:#6a8759">&quot;Anna&quot;</span><span style="color:#cc7832"> and</span><span style="color:#a9b7c6"> data[</span><span style="color:#6897bb">3</span><span style="color:#a9b7c6">] == </span><span style="color:#6a8759">&quot;F&quot;</span><span style="color:#cc7832"> and</span><span style="color:#a9b7c6"> data[</span><span style="color:#6897bb">4</span><span style="color:#a9b7c6">] == </span><span style="color:#6a8759">&quot;CA&quot;</span><span style="color:#a9b7c6">:</span></div>
<div class="m" style="left:484.492px;top:289.67px;color:#606366;font-size:12px;letter-spacing:-.193px">9</div>
<div class="m" style="left:532px;top:289.67px;color:#a9b7c6;"><span style="color:#a9b7c6">            xs.append(data[</span><span style="color:#6897bb">2</span><span style="color:#a9b7c6">])</span></div>
<div class="m" style="left:477.484px;top:307.67px;color:#606366;font-size:12px;letter-spacing:-.193px">10</div>
<div class="m" style="left:532px;top:307.67px;color:#a9b7c6;"><span style="color:#a9b7c6">            ys.append(data[</span><span style="color:#6897bb">5</span><span style="color:#a9b7c6">])</span></div>
<div class="m" style="left:477.484px;top:325.67px;color:#606366;font-size:12px;letter-spacing:-.193px">11</div>
<div class="m" style="left:477.484px;top:343.67px;color:#606366;font-size:12px;letter-spacing:-.193px">12</div>
<div class="m" style="left:532px;top:343.67px;color:#a9b7c6;"><span style="color:#a9b7c6">plt.plot(xs</span><span style="color:#cc7832">,</span><span style="color:#a9b7c6"> ys</span><span style="color:#cc7832">,</span><span style="color:#a9b7c6"> </span><span style="color:#aa4926">color</span><span style="color:#a9b7c6">=</span><span style="color:#6a8759">&quot;r&quot;</span><span style="color:#cc7832">,</span><span style="color:#a9b7c6"> </span><span style="color:#aa4926">label</span><span style="color:#a9b7c6">=</span><span style="color:#6a8759">&quot;Anna&quot;</span><span style="color:#a9b7c6">)</span></div>
<div class="m" style="left:477.484px;top:361.67px;color:#606366;font-size:12px;letter-spacing:-.193px">13</div>
<div class="m" style="left:532px;top:361.67px;color:#a9b7c6;"><span style="color:#a9b7c6">plt.legend()</span></div>
<div class="m" style="left:477.484px;top:379.67px;color:#a4a3a3;font-size:12px;letter-spacing:-.193px">14</div>
<div class="m" style="left:532px;top:379.67px;color:#a9b7c6;"><span style="color:#a9b7c6">plt.show()</span></div>
<div style="position:absolute;left:558px;top:252px;width:1px;height:72px;background:#393939;"></div>
<div style="position:absolute;left:586px;top:288px;width:1px;height:36px;background:#393939;"></div>
<svg style="position:absolute;left:523.3px;top:223px;" width="8" height="10" viewBox="0 0 8 10"><path fill="#2b2b2b" stroke="#5f6163" stroke-width="1" d="M.5 .5h7v5L4 9 .5 5.500zM.5 3.500h7"/></svg>
<svg style="position:absolute;left:523.3px;top:241px;" width="8" height="10" viewBox="0 0 8 10"><path fill="#2b2b2b" stroke="#5f6163" stroke-width="1" d="M.5 .5h7v5L4 9 .5 5.500zM.5 3.500h7"/></svg>
<svg style="position:absolute;left:523.3px;top:277px;" width="8" height="10" viewBox="0 0 8 10"><path fill="#2b2b2b" stroke="#5f6163" stroke-width="1" d="M.5 .5h7v5L4 9 .5 5.500zM.5 3.500h7"/></svg>
<svg style="position:absolute;left:523.3px;top:311px;" width="8" height="10" viewBox="0 0 8 10"><path fill="#2b2b2b" stroke="#5f6163" stroke-width="1" d="M.5 9.500h7v-5L4 1 .5 4.500zM.5 6.500h7"/></svg>
<svg style="position:absolute;left:1851px;top:150px;" width="12" height="12" viewBox="0 0 12 12"><path fill="#8a7e62" d="M6 .8L12 11.400H0z"/><path stroke="#2b2b2b" stroke-width="1.300" d="M6 4v4M6 9v1.300"/></svg>
<svg style="position:absolute;left:1882px;top:153px;" width="10" height="7" viewBox="0 0 10 7"><path fill="none" stroke="#afb1b3" stroke-width="1.400" d="M1 5.800l4-4 4 4"/></svg>
<svg style="position:absolute;left:1903px;top:154px;" width="10" height="7" viewBox="0 0 10 7"><path fill="none" stroke="#afb1b3" stroke-width="1.400" d="M1 1.200l4 4 4-4"/></svg>
<div style="position:absolute;left:1906px;top:404px;width:14px;height:2px;background:#8a7b5a;"></div>
<svg style="position:absolute;left:595px;top:393.5px;" width="8" height="3" viewBox="0 0 8 3"><path fill="none" stroke="#b3ad7c" stroke-width=".9" d="M0 .4l1.750 1.800 1.750-1.800 1.750 1.800 1.750-1.800"/></svg>
<svg style="position:absolute;left:55.2px;top:659px;" width="16" height="16" viewBox="0 0 16 16"><g opacity="1"><path fill="#3f7ea6" d="M7.900 1C5.900 1 4.500 1.700 4.500 3v1.800h3.600v.6H3.200C1.900 5.400 1 6.600 1 8.300c0 1.800.9 2.900 2.100 2.900h1.300V9.300c0-1.300 1.100-2.300 2.400-2.300h3.300c1.100 0 1.900-.9 1.900-2V3c0-1.300-1.800-2-4.100-2zM6 2.200a.7.7 0 110 1.400.7.7 0 010-1.400z"/><path fill="#b3982b" d="M8.100 15c2 0 3.400-.7 3.400-2v-1.800H7.900v-.6h4.900c1.300 0 2.200-1.200 2.200-2.900 0-1.800-.9-2.900-2.100-2.900h-1.300v1.900c0 1.300-1.100 2.300-2.400 2.300H5.900c-1.100 0-1.900.9-1.900 2v2c0 1.300 1.800 2 4.100 2zm1.900-1.200a.7.7 0 110-1.400.7.7 0 010 1.400z"/></g></svg>
<svg style="position:absolute;left:116.3px;top:664px;" width="10" height="10" viewBox="0 0 10 10"><path stroke="#75787a" stroke-width="1" d="M.8 .8l7.400 7.400M8.200 .8L.8 8.200"/></svg>
<div style="position:absolute;left:43px;top:678px;width:93px;height:3px;border-radius:1.500px;background:#747a80"></div>
<svg style="position:absolute;left:1873px;top:659px;" width="16" height="16" viewBox="0 0 16 16"><path fill="#afb1b3" fill-rule="evenodd" stroke="#afb1b3" stroke-width=".5" stroke-linejoin="round" d="M6.39 3.80L6.78 1.72L9.22 1.72L9.61 3.80L10.83 4.50L12.83 3.80L14.05 5.92L12.44 7.30L12.44 8.70L14.05 10.08L12.83 12.20L10.83 11.50L9.61 12.20L9.22 14.28L6.78 14.28L6.39 12.20L5.17 11.50L3.17 12.20L1.95 10.08L3.56 8.70L3.56 7.30L1.95 5.92L3.17 3.80L5.17 4.50zM8 5.800a2.200 2.200 0 100 4.400 2.200 2.200 0 000-4.400z"/><circle cx="8" cy="8" r="1.700" fill="none"/></svg>
<div style="position:absolute;left:1901px;top:666px;width:12px;height:2px;background:#afb1b3;"></div>
<svg style="position:absolute;left:6px;top:687px;" width="16" height="16" viewBox="0 0 16 16"><path fill="#499c54" d="M3.700 2.200l10 5.900-10 5.900z"/></svg>
<svg style="position:absolute;left:6px;top:713px;" width="16" height="16" viewBox="0 0 16 16"><path stroke="#afb1b3" stroke-width="3" stroke-linecap="round" d="M2.800 13.200L9.500 6.500"/><circle cx="10.800" cy="5.200" r="4" fill="#afb1b3"/><path stroke="#3c3f41" stroke-width="2.700" d="M11.200 4.800L15.500 .5"/></svg>
<div style="position:absolute;left:4px;top:737px;width:20px;height:1px;background:#515355;"></div>
<div style="position:absolute;left:9px;top:749px;width:10px;height:10px;background:#5b5c5d;"></div>
<div style="position:absolute;left:4px;top:770px;width:20px;height:1px;background:#515355;"></div>
<svg style="position:absolute;left:6px;top:779px;" width="16" height="16" viewBox="0 0 16 16"><g fill="#afb1b3"><rect x="2" y="3" width="7" height="4.400"/><rect x="10" y="3" width="4" height="4.400"/><rect x="2" y="8.400" width="12" height="4.600"/></g></svg>
<div style="position:absolute;left:4px;top:803px;width:20px;height:1px;background:#515355;"></div>
<svg style="position:absolute;left:6px;top:812px;" width="16" height="16" viewBox="0 0 16 16"><path fill="#afb1b3" d="M9.500 1.200l5.300 5.300-1.800.6-1.800 1.800.3 3.300-1.500 1.000-3.100-3.100L2 15l-1-.1L.9 14l4.900-4.900L2.700 6l1-1.500 3.300.3 1.800-1.800z"/></svg>
<svg style="position:absolute;left:35px;top:688px;" width="16" height="16" viewBox="0 0 16 16"><path fill="none" stroke="#5e6163" stroke-width="1.800" d="M8 14V3.500M3.800 7.500L8 3.300l4.200 4.200"/></svg>
<svg style="position:absolute;left:35px;top:714px;" width="16" height="16" viewBox="0 0 16 16"><path fill="none" stroke="#5e6163" stroke-width="1.800" d="M8 2V12.500M3.800 8.500L8 12.700l4.200-4.200"/></svg>
<svg style="position:absolute;left:35px;top:740px;" width="16" height="16" viewBox="0 0 16 16"><g fill="none" stroke="#afb1b3" stroke-width="1.900"><path d="M1.500 3h13M1.500 7.500h10.200a2.800 2.800 0 010 5.600H8.500"/><path d="M1.500 12h3"/></g><path fill="#afb1b3" d="M9.500 9.800v5L6.500 12.300z"/></svg>
<div style="position:absolute;left:32px;top:763px;width:22px;height:22px;border-radius:4px;background:#5c6164"></div>
<svg style="position:absolute;left:35px;top:766px;" width="16" height="16" viewBox="0 0 16 16"><g fill="#afb1b3"><rect x="2" y="13" width="12" height="1.800"/><rect x="2" y="5" width="4.500" height="1.600"/><rect x="2" y="8.500" width="4.500" height="1.600"/><rect x="10" y="1.500" width="1.800" height="7"/><path d="M7.400 7l3.500 4 3.500-4z"/></g></svg>
<svg style="position:absolute;left:35px;top:792px;" width="16" height="16" viewBox="0 0 16 16"><g fill="#afb1b3"><rect x="4" y="1.500" width="8" height="3"/><path d="M1.500 5.500h13v6h-2.500v-2.500h-8v2.500H1.500z"/><rect x="5" y="10" width="6" height="4.500" fill="none" stroke="#afb1b3" stroke-width="1.200"/></g></svg>
<svg style="position:absolute;left:35px;top:817px;" width="16" height="16" viewBox="0 0 16 16"><g fill="#afb1b3"><rect x="3" y="3" width="10" height="1.800"/><rect x="6" y="1.500" width="4" height="2"/><path d="M4 6h8v8.500H4z"/></g></svg>
<div style="position:absolute;left:58px;top:680px;width:1862px;height:370px;overflow:hidden">
<div class="m" style="left:9.400px;top:3.07px;color:#bbbbbb">/home/andre/anaconda3/envs/pythonProject/bin/python /home/andre/PycharmProjects/pythonProject/pythonProject/Plot/Anna.py</div>
<div class="m" style="left:9.400px;top:21.07px;color:#ff6b68">QApplication: invalid style override passed, ignoring it.</div>
<div class="m" style="left:9.400px;top:39.07px;color:#ff6b68">libGL error: MESA-LOADER: failed to open iris: /home/andre/anaconda3/envs/pythonProject/lib/python3.10/site-packages/matplotlib/../../../libstdc++.so.6: version `GLIBCXX_3.4.30&#x27; not found (required by /usr/lib/dri/iris_dri.so) (search paths /usr/lib/dri, suffix _dri)</div>
<div class="m" style="left:9.400px;top:57.07px;color:#ff6b68">libGL error: failed to load driver: iris</div>
<div class="m" style="left:9.400px;top:75.07px;color:#ff6b68">libGL error: MESA-LOADER: failed to open swrast: /home/andre/anaconda3/envs/pythonProject/lib/python3.10/site-packages/matplotlib/../../../libstdc++.so.6: version `GLIBCXX_3.4.30&#x27; not found (required by /usr/lib/dri/swrast_dri.so) (search paths /usr/lib/dri, suffix _dri)</div>
<div class="m" style="left:9.400px;top:93.07px;color:#ff6b68">libGL error: failed to load driver: swrast</div>
<div class="m" style="left:9.400px;top:129.07px;color:#bbbbbb">Process finished with exit code 0</div>
</div>
<svg style="position:absolute;left:4px;top:1064px;" width="16" height="12" viewBox="0 0 16 12"><rect x="3.500" y="1" width="9" height="9.500" fill="none" stroke="#afb1b3" stroke-width="1.100"/><path stroke="#afb1b3" stroke-width="1.100" d="M1.300 .5v10.500M14.700 .5v10.500"/></svg>
<svg style="position:absolute;left:1873px;top:1063px;" width="13" height="13" viewBox="0 0 13 13"><path fill="none" stroke="#afb1b3" stroke-width="1.700" d="M2 6.500V4a2.300 2.300 0 014.600 0v1"/><rect x="4.500" y="6" width="7.500" height="6" fill="#afb1b3"/></svg>
<svg style="position:absolute;left:1897px;top:1063px;" width="13" height="14" viewBox="0 0 13 14"><path fill="#afb1b3" d="M6.500 1a4 4 0 014 4v3.500l1.500 2.500H1l1.500-2.500V5a4 4 0 014-4z"/><rect x="5" y="11.800" width="3" height="1.700" rx=".8" fill="#afb1b3"/></svg>
<span class="t sb" id="t0" style="left:14.00px;top:5.80px;font-size:15px;font-weight:400;color:#dadada;transform:scaleX(1.0501)">Aktivitäten</span>
<span class="t sb" id="t1" style="left:141.60px;top:5.80px;font-size:15px;font-weight:400;color:#dadada;transform:scaleX(0.9719)">PyCharm Community Edition</span>
<span class="t sb" id="t2" style="left:914.10px;top:5.80px;font-size:15px;font-weight:400;color:#dadada;transform:scaleX(0.9570)">19. Jul  12:36</span>
<span class="t sb" id="t3" style="left:875.60px;top:38.80px;font-size:15px;font-weight:400;color:#f0f0f0;transform:scaleX(0.9824)">pythonProject – Anna.py</span>
<span class="t" id="t4" style="left:6.00px;top:66.80px;font-size:15px;font-weight:400;color:#bbbbbb;transform:scaleX(0.9756)"><u>F</u>ile</span>
<span class="t" id="t5" style="left:43.00px;top:66.80px;font-size:15px;font-weight:400;color:#bbbbbb;transform:scaleX(1.0084)"><u>E</u>dit</span>
<span class="t" id="t6" style="left:82.00px;top:66.80px;font-size:15px;font-weight:400;color:#bbbbbb;transform:scaleX(1.0005)"><u>V</u>iew</span>
<span class="t" id="t7" style="left:127.02px;top:66.80px;font-size:15px;font-weight:400;color:#bbbbbb;transform:scaleX(0.9865)"><u>N</u>avigate</span>
<span class="t" id="t8" style="left:198.00px;top:66.80px;font-size:15px;font-weight:400;color:#bbbbbb;transform:scaleX(0.9317)"><u>C</u>ode</span>
<span class="t" id="t9" style="left:243.46px;top:66.80px;font-size:15px;font-weight:400;color:#bbbbbb;transform:scaleX(0.9722)"><u>R</u>efactor</span>
<span class="t" id="t10" style="left:311.16px;top:66.80px;font-size:15px;font-weight:400;color:#bbbbbb;transform:scaleX(0.9608)">R<u>u</u>n</span>
<span class="t" id="t11" style="left:349.00px;top:66.80px;font-size:15px;font-weight:400;color:#bbbbbb;transform:scaleX(1.0004)"><u>T</u>ools</span>
<span class="t" id="t12" style="left:396.46px;top:66.80px;font-size:15px;font-weight:400;color:#bbbbbb;transform:scaleX(0.8387)">VC<u>S</u></span>
<span class="t" id="t13" style="left:435.46px;top:66.80px;font-size:15px;font-weight:400;color:#bbbbbb;transform:scaleX(0.9928)"><u>W</u>indow</span>
<span class="t" id="t14" style="left:500.04px;top:66.80px;font-size:15px;font-weight:400;color:#bbbbbb;transform:scaleX(1.0137)"><u>H</u>elp</span>
<span class="t" id="t15" style="left:27.62px;top:91.80px;font-size:15px;font-weight:400;color:#bbbbbb;transform:scaleX(1.0001)">pythonProject</span>
<span class="t" id="t16" style="left:1717.48px;top:92.80px;font-size:15px;font-weight:400;color:#bbbbbb;transform:scaleX(0.9029)">Anna</span>
<span class="t" id="t17" style="left:31.16px;top:120.80px;font-size:15px;font-weight:400;color:#bbbbbb;transform:scaleX(1.0449)">Project</span>
<span class="t" id="t18" style="left:42.14px;top:145.80px;font-size:15px;font-weight:700;color:#c4c4c4;transform:scaleX(0.9640)">pythonProject</span>
<span class="t" id="t20" style="left:60.60px;top:168.80px;font-size:15px;font-weight:400;color:#bbbbbb;transform:scaleX(1.0197)">Plot</span>
<span class="t" id="t21" style="left:79.04px;top:191.80px;font-size:15px;font-weight:400;color:#bbbbbb;transform:scaleX(0.9446)">Anna.py</span>
<span class="t" id="t22" style="left:79.04px;top:214.80px;font-size:15px;font-weight:400;color:#bbbbbb;transform:scaleX(0.9816)">df.py</span>
<span class="t" id="t23" style="left:78.14px;top:237.80px;font-size:15px;font-weight:400;color:#bbbbbb;transform:scaleX(1.0188)">plot.py</span>
<span class="t" id="t24" style="left:79.04px;top:260.80px;font-size:15px;font-weight:400;color:#bbbbbb;transform:scaleX(0.9592)">set aufgabe.py</span>
<span class="t" id="t25" style="left:79.04px;top:283.80px;font-size:15px;font-weight:400;color:#bbbbbb;transform:scaleX(0.9961)">test.py</span>
<span class="t" id="t26" style="left:60.14px;top:306.80px;font-size:15px;font-weight:400;color:#bbbbbb;transform:scaleX(1.0080)">main.py</span>
<span class="t" id="t27" style="left:42.10px;top:329.80px;font-size:15px;font-weight:400;color:#bbbbbb;transform:scaleX(1.0000)">External Libraries</span>
<span class="t" id="t28" style="left:42.10px;top:352.80px;font-size:15px;font-weight:400;color:#bbbbbb;transform:scaleX(0.9498)">Scratches and Consoles</span>
<span class="t" id="t29" style="left:499.60px;top:120.80px;font-size:15px;font-weight:400;color:#bbbbbb;transform:scaleX(0.9962)">main.py</span>
<span class="t" id="t30" style="left:602.50px;top:120.80px;font-size:15px;font-weight:400;color:#bbbbbb;transform:scaleX(0.9820)">test.py</span>
<span class="t" id="t31" style="left:696.02px;top:120.80px;font-size:15px;font-weight:400;color:#bbbbbb;transform:scaleX(0.9347)">Anna.py</span>
<span class="t" id="t32" style="left:798.52px;top:120.80px;font-size:15px;font-weight:400;color:#bbbbbb;transform:scaleX(0.9440)">df.py</span>
<span class="t" id="t33" style="left:880.08px;top:120.80px;font-size:15px;font-weight:400;color:#bbbbbb;transform:scaleX(0.9770)">plot.py</span>
<span class="t" id="t34" style="left:974.52px;top:120.80px;font-size:15px;font-weight:400;color:#bbbbbb;transform:scaleX(0.9531)">set aufgabe.py</span>
<span class="t" id="t35" style="left:1864.10px;top:147.30px;font-size:14px;font-weight:400;color:#a9a9a9;transform:scaleX(1.0119)">1</span>
<span class="t" id="t36" style="left:5.60px;top:657.80px;font-size:15px;font-weight:400;color:#bbbbbb;transform:scaleX(0.9727)">Run:</span>
<span class="t" id="t37" style="left:75.50px;top:657.80px;font-size:15px;font-weight:400;color:#bbbbbb;transform:scaleX(0.9488)">Anna</span>
<span class="t" id="t38" style="left:1492.85px;top:1059.80px;font-size:15px;font-weight:400;color:#bbbbbb;transform:scaleX(0.8974)">14:11</span>
<span class="t" id="t39" style="left:1536.58px;top:1059.80px;font-size:15px;font-weight:400;color:#bbbbbb;transform:scaleX(0.9127)">LF</span>
<span class="t" id="t40" style="left:1563.58px;top:1059.80px;font-size:15px;font-weight:400;color:#bbbbbb;transform:scaleX(0.9854)">UTF-8</span>
<span class="t" id="t41" style="left:1617.00px;top:1059.80px;font-size:15px;font-weight:400;color:#bbbbbb;transform:scaleX(0.9569)">4 spaces</span>
<span class="t" id="t42" style="left:1685.12px;top:1059.80px;font-size:15px;font-weight:400;color:#bbbbbb;transform:scaleX(0.9596)">Python 3.10 (pythonProject)</span>
</body></html>
